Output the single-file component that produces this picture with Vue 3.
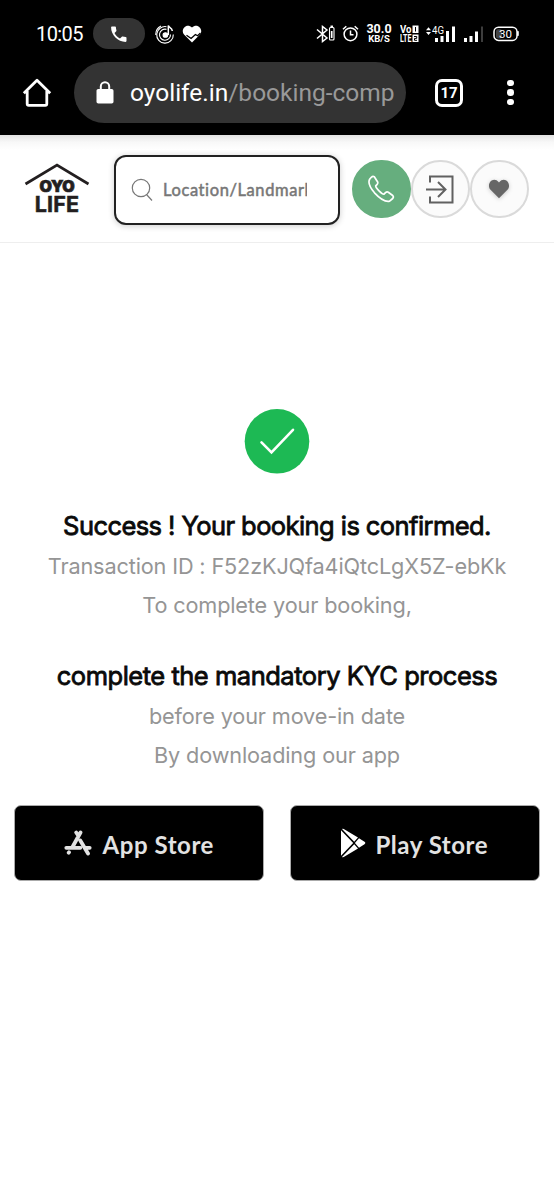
<script setup>
const primaryLines = ['Transaction ID : F52zKJQfa4iQtcLgX5Z-ebKk', 'To complete your booking,']
const secondaryLines = ['before your move-in date', 'By downloading our app']
</script>

<template>
  <div class="screen">
    <div class="chrome">
      <div class="status">
        <span class="clock">10:05</span>
        <span class="call-pill">
          <svg width="20" height="20" viewBox="0 0 24 24"><path fill="#fff" d="M6.6 10.8c1.4 2.8 3.8 5.1 6.6 6.6l2.2-2.2c.3-.3.7-.4 1-.2 1.1.4 2.3.6 3.6.6.6 0 1 .4 1 1V20.500c0 .6-.4 1-1 1C10.600 21.500 2.500 13.400 2.500 4c0-.6.4-1 1-1H7.300c.6 0 1 .4 1 1 0 1.200.2 2.400.6 3.600.1.300 0 .700-.2 1z" /></svg>
        </span>
        <svg class="music" width="20" height="20" viewBox="0 0 20 20" fill="none" stroke="#fff" stroke-width="1.1">
          <path d="M11.500 2.700A8.300 8.300 0 1 0 18.300 10.500" /><path d="M.8 11A9.500 9.500 0 0 1 6 2" />
          <path d="M11.500 5.400A5.500 5.500 0 1 0 15.500 10.500" />
          <circle cx="10.400" cy="11" r="2.300" fill="#fff" />
          <path d="M13.300 11V1.500c.5 2.300 3.800 2 4 5.500" stroke-width="1.500" />
        </svg>
        <svg class="health" width="20" height="18" viewBox="0 0 20 18">
          <path fill="#fff" d="M10 17.500 2 9.600C-2 4.800 4.500-2.500 10 2.600 15.500-2.500 22 4.800 18 9.600z" />
          <path d="m4.500 10.300 4.600 3.200 4.300-4 2.200 1.200L18.500 8" fill="none" stroke="#000" stroke-width="1.300" />
        </svg>
        <span class="grow"></span>
        <svg width="20" height="18" viewBox="0 0 20 18" fill="none" stroke="#fff" stroke-width="1.500">
          <path d="m1 4.500 10 8.500-4.500 3.500V1.500L11 5 1 13.500" />
          <rect x="13.500" y="2.500" width="4.500" height="12.500" rx="1" stroke-width="1.100" /><path d="M15.700 6v7" stroke-width="1.700" /><path d="M14.500 1.300H17" />
        </svg>
        <svg class="alarm" width="17" height="17" viewBox="0 0 17 17" fill="none" stroke="#fff" stroke-width="1.500">
          <circle cx="8.500" cy="9.300" r="6.400" /><path d="M8.500 5.500v4.200h3M1 4.200 4.300 1.200M16 4.200l-3.300-3" />
        </svg>
        <span class="rate"><b>30.0</b><small>KB/S</small></span>
        <svg class="volte" width="19" height="18" viewBox="0 0 19 18" fill="#fff" font-family="Roboto, sans-serif" font-weight="700">
          <text x="0" y="8" font-size="10" textLength="11.500" lengthAdjust="spacingAndGlyphs">Vo</text>
          <text x="0" y="17" font-size="10" textLength="11.500" lengthAdjust="spacingAndGlyphs">LTE</text>
          <rect x="12.500" y="0.500" width="6" height="7.500" /><rect x="12.500" y="9.500" width="6" height="7.500" />
          <g fill="none" stroke="#000"><path d="M15.500 2v4.500" /><path d="M14 11.500h2.700v1.900H14.500v1.900H17" /></g>
        </svg>
        <svg class="sig-one" width="31" height="18" viewBox="0 0 31 18" fill="#fff">
          <path d="m0 5.200 2.500-3 2.500 3zM0 7l2.500 3L5 7z" />
          <text x="6" y="9" font-size="10.500" font-family="Roboto, sans-serif" textLength="12" lengthAdjust="spacingAndGlyphs">4G</text>
          <path d="M9 13h3v4H9zM14.500 11h3v6h-3zM20 6h3v11h-3zM26 1.500h3V17h-3z" />
        </svg>
        <svg class="sig-two" width="21" height="18" viewBox="0 0 21 18" fill="#fff">
          <path d="M1 13h3v4H1zM6.500 11h3v6h-3zM12 6.500h3V17h-3z" /><path fill="#3d3d3d" d="M18 1.500h2V17h-2z" />
        </svg>
        <svg class="battery" width="26" height="16" viewBox="0 0 26 16">
          <rect x="1" y="1.200" width="23" height="13.200" rx="4.500" fill="none" stroke="#fff" stroke-width="1.500" />
          <rect x="3" y="3.200" width="6" height="9.200" rx="2" fill="#444" /><rect x="24" y="5" width="1.800" height="5" rx=".8" fill="#fff" />
          <text x="6" y="11.900" fill="#fff" font-size="11.500" font-family="Roboto, sans-serif" textLength="13" lengthAdjust="spacingAndGlyphs">30</text>
        </svg>
      </div>
      <div class="toolbar">
        <svg class="home" width="30" height="30" viewBox="0 0 30 30" fill="none" stroke="#fff" stroke-width="2.800" stroke-linejoin="round">
          <path d="M1.800 15.200 15 2.200l13.200 13M5.200 13v12.800q0 1.500 1.500 1.500H23.300q1.500 0 1.500-1.500V13" />
        </svg>
        <div class="omnibox">
          <svg width="18" height="23" viewBox="0 0 18 23"><rect x=".5" y="8" width="17" height="14.500" rx="1.800" fill="#fff" /><path d="M4.800 9V5.500a4.200 4.200 0 0 1 8.400 0V9" fill="none" stroke="#fff" stroke-width="2" /></svg>
          <span class="url">oyolife.in<span class="path">/booking-comp</span></span>
        </div>
        <span class="tabs">17</span>
        <span class="dots"><i></i><i></i><i></i></span>
      </div>
    </div>

    <header class="header">
      <div class="logo">
        <svg width="66" height="24" viewBox="0 0 66 24"><path d="M1.500 22 33 3l31.500 19" fill="none" stroke="#231f20" stroke-width="2.700" /></svg>
        <span class="oyo">OYO</span>
        <span class="life">LIFE</span>
      </div>
      <div class="search">
        <svg width="22" height="24" viewBox="0 0 22 24" fill="none" stroke="#777" stroke-width="1.200"><circle cx="10" cy="10" r="8.700" /><path d="m15.500 16.500 5.500 6" /></svg>
        <span class="placeholder">Location/Landmark</span>
      </div>
      <div class="actions">
        <span class="round green">
          <svg width="28" height="28" viewBox="0 0 28 28" fill="none" stroke="#fff" stroke-width="1.700" stroke-linejoin="round"><path d="M7.300 1.800Q5.800.9 4.300 2.300L2.800 4Q-.2 8.700 7.500 17.800 16.500 27.500 22.600 26.200L25.700 23.500Q27 22 25.700 20.500L21.300 17.200Q19.800 16.500 18.500 17.700L17 19.200Q15.600 19.500 12.300 16.200 8.800 12.700 8.700 10.900L10.200 9.300Q11.200 8 10.500 6.700z" /></svg>
        </span>
        <span class="round">
          <svg width="30" height="30" viewBox="0 0 30 30" fill="none" stroke="#616161" stroke-width="2"><path d="M5 8.500V2.500h22.500v26H5v-6M1 15.500h19M13 8l7.500 7.500L13 23" /></svg>
        </span>
        <span class="round">
          <svg class="heart" width="22" height="20" viewBox="0 0 22 20"><path fill="#666" d="M11 19.200 2.300 10.500C-2 5 5-3.500 11 3.400 17-3.500 24 5 19.700 10.500z" /></svg>
        </span>
      </div>
    </header>

    <main class="content">
      <svg class="check" width="66" height="66" viewBox="0 0 66 66"><circle cx="33" cy="33.300" r="32.300" fill="#1db954" /><path d="m17.500 34.300 10 10L49 21.800" fill="none" stroke="#fff" stroke-width="2.600" stroke-linecap="round" /></svg>
      <h1 class="title first">Success ! Your booking is confirmed.</h1>
      <p v-for="line in primaryLines" :key="line" class="line">{{ line }}</p>
      <h1 class="title second">complete the mandatory KYC process</h1>
      <p v-for="line in secondaryLines" :key="line" class="line">{{ line }}</p>
      <div class="stores">
        <button class="store">
          <svg width="28" height="26" viewBox="0 0 28 26" fill="none" stroke="#e2e2e2" stroke-width="3.800" stroke-linecap="round"><path d="M16.500 2.500 8.500 17M12.200 2.500l2 3M2.300 17.800h14M16.300 10.500l7.700 13M22 17.800h3.700M4.700 22.700l.3-.4" /></svg>
          <span>App Store</span>
        </button>
        <button class="store play">
          <svg width="26" height="30" viewBox="0 0 26 30" fill="#fff"><path d="M1 2.300 13.200 15 1 27.700zM2 1.100Q3 .3 5 1.800L18 9.600 14.200 13.800zM2 28.900Q3 29.700 5 28.200L18 20.400l-3.800-4.200zM19 10.300l5.500 3.500q1.600 1.200 0 2.400L19 19.700 14.900 15z" /></svg>
          <span>Play Store</span>
        </button>
      </div>
    </main>
  </div>
</template>

<style>
body { margin: 0; background: #fff; }
</style>

<style scoped>
.screen { width: 554px; height: 1200px; overflow: hidden; background: #fff; font-family: Inter, sans-serif; }
.screen svg { display: block; flex: none; }
.chrome { height: 135px; background: #000; color: #fff; font-family: Roboto, sans-serif; }
.status { display: flex; align-items: center; height: 62px; padding: 5px 35px 0 36px; box-sizing: border-box; }
.clock { width: 48px; font-size: 20px; letter-spacing: -.6px; white-space: nowrap; }
.call-pill { display: flex; align-items: center; justify-content: center; width: 52px; height: 31px; margin-left: 9px; border-radius: 16px; background: #333; }
.music { margin-left: 10px; }
.health { margin-left: 7px; }
.grow { flex: 1; }
.alarm { margin-left: 6px; }
.rate { display: flex; flex-direction: column; align-items: center; width: 26px; margin-left: 7px; }
.rate b { font-size: 12.500px; line-height: 10px; }
.rate small { font-size: 9.500px; font-weight: 700; line-height: 10px; white-space: nowrap; }
.volte { margin-left: 8px; }
.sig-one { margin-left: 7px; }
.sig-two { margin-left: 6px; }
.battery { margin-left: 9px; }
.toolbar { display: flex; align-items: center; height: 61px; }
.home { margin-left: 22px; }
.omnibox { display: flex; align-items: center; width: 332px; height: 61px; margin-left: 22px; padding-left: 22px; box-sizing: border-box; border-radius: 31px; background: #333; }
.url { margin: 0 0 0 16px; font-size: 24.5px; white-space: nowrap; }
.path { color: #999; }
.tabs { width: 28px; height: 28px; margin-left: 29px; box-sizing: border-box; border: 3px solid #fff; border-radius: 7px; font-size: 15px; font-weight: 700; line-height: 22px; text-align: center; }
.dots { display: flex; flex-direction: column; gap: 3px; margin-left: 44px; }
.dots i { width: 6.500px; height: 6.500px; border-radius: 50%; background: #fff; }
.header { display: flex; align-items: center; height: 108px; box-sizing: border-box; border-bottom: 1.500px solid #eee; background: linear-gradient(#e2e2e2, #f8f8f8 7px, #fff 15px); }
.logo { display: flex; flex-direction: column; align-items: center; width: 66px; height: 54px; margin-left: 24px; color: #231f20; }
.oyo { margin-top: -8px; font: 900 16px/16px Inter, sans-serif; -webkit-text-stroke: .7px #231f20; letter-spacing: -.2px; }
.life { font: 700 21.500px/20px Inter, sans-serif; -webkit-text-stroke: .5px #231f20; letter-spacing: .2px; }
.search { display: flex; align-items: center; width: 226px; height: 70px; margin: 3px 0 0 24px; padding-left: 15px; box-sizing: border-box; border: 2px solid #222; border-radius: 12px; background: #fff; box-shadow: 0 1px 6px rgba(0, 0, 0, .2); }
.placeholder { width: 144px; margin-left: 10px; overflow: hidden; color: #777; font: 400 16.500px Lato, sans-serif; letter-spacing: .6px; -webkit-text-stroke: .5px #777; white-space: nowrap; }
.actions { display: flex; gap: .5px; margin: 1px 0 0 12px; }
.round { display: flex; align-items: center; justify-content: center; width: 58.500px; height: 58.500px; box-sizing: border-box; border: 2px solid #dadada; border-radius: 50%; background: #fbfbfb; }
.green { border-color: #66ae7e; background: #66ae7e; }
.heart { filter: drop-shadow(0 1px 2px rgba(0, 0, 0, .2)); }
.content { display: flex; flex-direction: column; align-items: center; padding-top: 165.300px; }
.title { margin: 0; color: #0a0a0a; font-size: 25.500px; font-weight: 400; line-height: 40px; -webkit-text-stroke: .8px #0a0a0a; white-space: nowrap; }
.first { margin-top: 31.700px; letter-spacing: -.57px; }
.second { margin-top: 31px; letter-spacing: -.48px; }
.title + .line { margin-top: 1px; }
.line { margin: 0; color: #959595; font-size: 21.700px; line-height: 39px; letter-spacing: -.15px; white-space: nowrap; }
.stores { display: flex; justify-content: space-between; width: 526px; margin-top: 30.500px; }
.store { display: flex; align-items: center; justify-content: center; gap: 10.500px; width: 250px; height: 76px; padding: 0; box-sizing: border-box; border: 1.500px solid #aaa; border-radius: 7px; background: #000; color: #e2e2e2; font: 700 24px Lato, sans-serif; letter-spacing: .55px; white-space: nowrap; }
.play { gap: 9.500px; padding-right: 2px; }
.store span { margin-top: 2px; }
</style>
